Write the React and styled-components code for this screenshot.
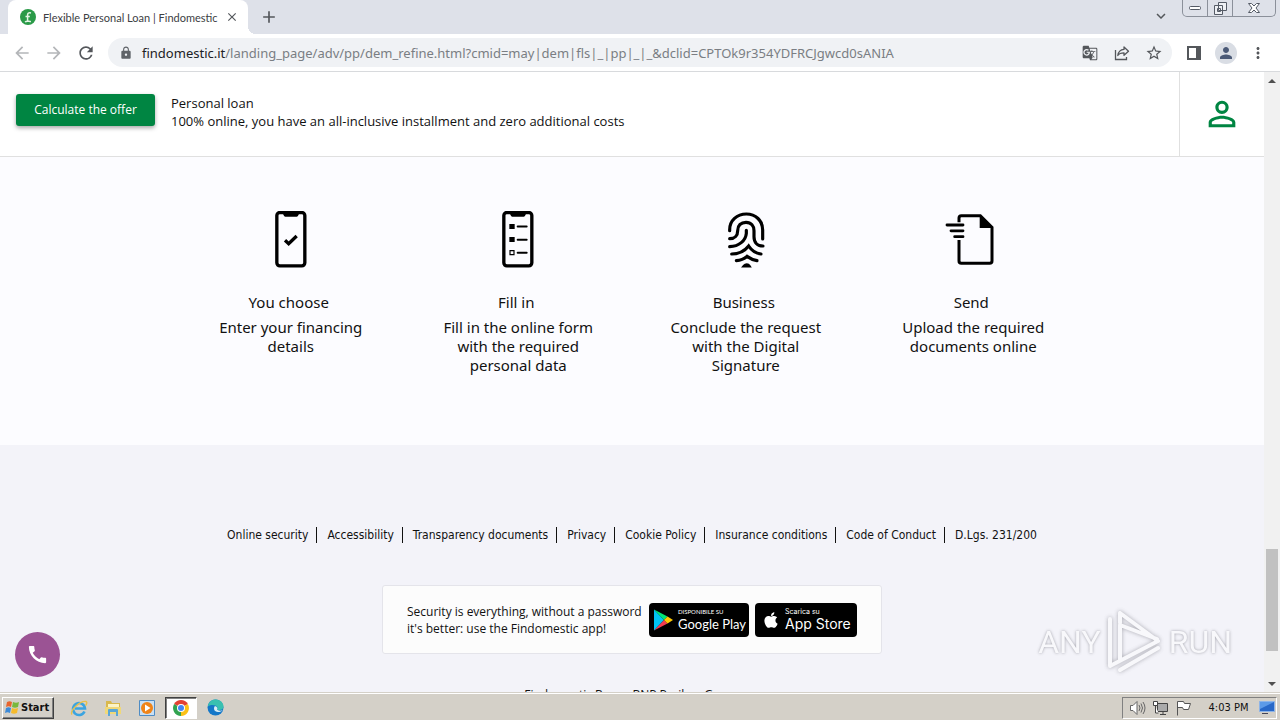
import React from 'react'
import styled, { createGlobalStyle, css } from 'styled-components'
import {
  MdAdd,
  MdArrowBack,
  MdArrowForward,
  MdCall,
  MdClose,
  MdGTranslate,
  MdKeyboardArrowDown,
  MdLock,
  MdMoreVert,
  MdPerson,
  MdPersonOutline,
  MdRefresh,
  MdStarBorder,
} from 'react-icons/md'
import { FaApple } from 'react-icons/fa'

const GlobalStyle = createGlobalStyle`
  *, *::before, *::after {
    box-sizing: border-box;
  }
  body {
    margin: 0;
    color: #111;
    font-family: 'Open Sans', 'Noto Sans', sans-serif;
    font-size: 13px;
  }
  button {
    border: 0;
    padding: 0;
    background: none;
    color: inherit;
    font: inherit;
    cursor: pointer;
  }
  h1, h2, p, ul {
    margin: 0;
    padding: 0;
    font-weight: 400;
  }
  a {
    color: inherit;
    text-decoration: none;
  }
  svg {
    display: block;
    flex: none;
  }
`;

const Desktop = styled.div`
  position: relative;
  display: flex;
  flex-direction: column;
  height: 100vh;
  overflow: hidden;
  background: #fff;
`;

/* browser */

const TabStrip = styled.div`
  display: flex;
  flex: none;
  align-items: flex-start;
  height: 34px;
  padding: 0 4px 0 8px;
  background: #dee1e9;
`;

const Tab = styled.div`
  position: relative;
  display: flex;
  align-items: center;
  width: 240px;
  height: 34px;
  margin-right: 4px;
  padding: 0 8px 0 12px;
  border-radius: 8px 8px 0 0;
  background: #fff;
  color: #3c4043;
  font-family: Lato, sans-serif;
  font-size: 11px;
  white-space: nowrap;

  &::after {
    content: '';
    position: absolute;
    left: 100%;
    bottom: 0;
    width: 8px;
    height: 8px;
    background: radial-gradient(circle at 100% 0, transparent 8px, #fff 8px);
  }
  span {
    flex: 1;
    margin-left: 7px;
  }
`;

const IconButton = styled.button`
  display: flex;
  flex: none;
  align-items: center;
  justify-content: center;
  width: ${p => p.$size || 32}px;
  height: ${p => p.$size || 32}px;
  color: ${p => (p.$faded ? '#b4b6b9' : '#54575b')};
`;

const WindowButtons = styled.div`
  display: flex;
  margin-left: 5px;
  border: 1px solid #8b909a;
  border-top: 0;
  border-radius: 0 0 5px 5px;

  button {
    display: flex;
    align-items: center;
    justify-content: center;
    width: 25px;
    height: 16px;
    border-right: 1px solid #8b909a;
  }
  button:last-child {
    width: 42px;
    border-right: 0;
  }
`;

const Spacer = styled.div`
  flex: 1;
`;

const Toolbar = styled.div`
  display: flex;
  flex: none;
  align-items: center;
  height: 38px;
  padding: 0 6px;
  border-bottom: 1px solid #d8dadd;
  background: #fff;
`;

const Omnibox = styled.label`
  display: flex;
  flex: 1;
  align-items: center;
  height: 29px;
  margin: 0 6px;
  padding: 0 2px;
  border-radius: 15px;
  background: #f0f2f5;
  color: #202124;
  font-family: 'Noto Sans', sans-serif;
  font-size: 13px;

  > svg {
    width: 32px;
    color: #5f6368;
  }
  input {
    flex: 1;
    min-width: 0;
    padding: 0;
    border: 0;
    outline: 0;
    background: none;
    color: #7a7e83;
    font: inherit;
  }
`;

const Avatar = styled.span`
  display: flex;
  align-items: center;
  justify-content: center;
  width: 22px;
  height: 22px;
  border-radius: 50%;
  background: #d9dde4;
  color: #4b5a77;
`;

const Viewport = styled.div`
  display: flex;
  flex: 1;
  min-height: 0;
`;

const Page = styled.div`
  flex: 1;
  min-width: 0;
  overflow: hidden;
`;

const Scrollbar = styled.div`
  display: flex;
  flex: none;
  flex-direction: column;
  align-items: center;
  width: 16px;
  background: #f1f1f1;
`;

const ScrollArrow = styled.button`
  display: flex;
  align-items: center;
  justify-content: center;
  width: 16px;
  height: 17px;
`;

const ScrollGap = styled.div`
  flex: ${p => p.$part};
`;

const Thumb = styled.div`
  flex: 102;
  width: 12px;
  background: #c1c1c1;
`;

/* page */

const OfferBar = styled.header`
  display: flex;
  height: 85px;
  padding-left: 16px;
  border-bottom: 1px solid #e0e0e0;
  background: #fff;
`;

const Offer = styled.div`
  display: flex;
  flex: 1;
  align-items: flex-start;
  gap: 16px;
  padding-top: 22px;
  line-height: 18px;
`;

const OfferButton = styled.button`
  width: 139px;
  height: 32px;
  border-radius: 3px;
  background: #008542;
  box-shadow: 0 2px 4px rgba(0, 0, 0, .35);
  color: #fff;
  font-size: 12px;
`;

const Account = styled.button`
  display: flex;
  align-items: center;
  justify-content: center;
  width: 85px;
  border-left: 1px solid #e0e0e0;
  color: #008542;
`;

const Steps = styled.section`
  padding: 54px 0 70px;
  background: #fcfcff;
`;

const StepGrid = styled.div`
  display: grid;
  grid-template-columns: repeat(4, 1fr);
  max-width: 910px;
  margin: 0 auto;
`;

const Step = styled.article`
  display: flex;
  flex-direction: column;
  align-items: center;
  font-family: 'Noto Sans', sans-serif;
  font-size: 15px;
  line-height: 19px;
  text-align: center;

  h2 {
    margin: 25px 0 6px;
    padding-right: 4px;
    font-size: 15px;
  }
  p {
    max-width: 168px;
  }
`;

const Footer = styled.footer`
  display: flex;
  flex-direction: column;
  align-items: center;
  min-height: 400px;
  padding-top: 82px;
  background: #f3f3f9;
  font-size: 12px;
`;

const FooterLinks = styled.ul`
  display: flex;
  list-style: none;
  font-family: 'DejaVu Sans Condensed', 'DejaVu Sans', sans-serif;
  line-height: 16px;
  white-space: nowrap;

  li + li {
    margin-left: 8px;
    padding-left: 10px;
    border-left: 1px solid #111;
  }
`;

const AppCard = styled.div`
  display: flex;
  align-items: center;
  justify-content: space-between;
  width: 500px;
  height: 69px;
  margin: 42px 0 32px;
  padding: 0 24px;
  border: 1px solid #e4e4ea;
  border-radius: 3px;
  background: #fcfcfc;

  p {
    line-height: 17px;
    white-space: nowrap;
  }
`;

const Badges = styled.div`
  display: flex;
  gap: 6px;
`;

const Badge = styled.a`
  display: flex;
  align-items: center;
  gap: 5px;
  width: ${p => p.$width}px;
  height: 34px;
  padding-left: ${p => p.$inset}px;
  border-radius: 4px;
  background: #000;
  color: #fff;
  font-family: ${p => p.$font}, sans-serif;
  font-size: ${p => p.$size}px;
  line-height: 16px;
  white-space: nowrap;

  small {
    display: block;
    font-size: ${p => p.$small}px;
    line-height: 8px;
  }
`;

const CallButton = styled.button`
  position: absolute;
  left: 15px;
  bottom: 43px;
  display: flex;
  align-items: center;
  justify-content: center;
  width: 45px;
  height: 45px;
  border-radius: 50%;
  background: #9b5394;
  color: #fff;
`;

const Watermark = styled.div`
  position: absolute;
  right: 48px;
  bottom: 46px;
  display: flex;
  align-items: center;
  gap: 6px;
  color: #fafafc;
  font-family: Roboto, 'Liberation Sans', sans-serif;
  font-size: 32px;
  line-height: 40px;
  text-shadow: 0 0 3px rgba(110, 110, 120, .8);
  opacity: .8;
  pointer-events: none;

  svg {
    filter: drop-shadow(0 0 2px rgba(110, 110, 120, .7));
  }
`;

/* taskbar */

const Taskbar = styled.div`
  display: flex;
  flex: none;
  align-items: center;
  height: 28px;
  padding: 2px 3px 0 2px;
  border-top: 1px solid #d4d0c8;
  background: #d4d0c8;
  box-shadow: inset 0 1px #fff;
  font-family: 'DejaVu Sans Condensed', 'DejaVu Sans', sans-serif;
  font-size: 11px;
`;

const StartButton = styled.button`
  display: flex;
  align-items: center;
  gap: 1px;
  width: 52px;
  height: 22px;
  margin-right: 9px;
  padding-left: 1px;
  border: 1px solid;
  border-color: #fff #404040 #404040 #fff;
  box-shadow: inset -1px -1px #808080;
  font-weight: 700;
`;

const TaskButton = styled.button`
  display: flex;
  align-items: center;
  justify-content: center;
  width: 32px;
  height: 22px;
  margin-right: 2px;
  ${p => p.$active && css`
    border: 1px solid;
    border-color: #404040 #fff #fff #404040;
    background: #fff;
    box-shadow: inset 1px 1px #808080;
  `}
`;

const Tray = styled.div`
  display: flex;
  align-items: center;
  gap: 6px;
  width: 155px;
  height: 22px;
  padding: 0 1px 0 6px;
  border: 1px solid;
  border-color: #808080 #fff #fff #808080;
  white-space: nowrap;

  time {
    flex: 1;
    padding-left: 6px;
    text-align: center;
  }
`;

const ShareIcon = () => (
  <svg width="16" height="16" viewBox="0 0 16 16" fill="none" stroke="currentColor" strokeWidth="1.3">
    <path d="M1.5 5v9.5h11V12" />
    <path d="M10 2l4.5 4.2L10 10.300V7.800c-3 0-5 .8-6.200 2.700C4.300 7 6.500 4.700 10 4.400z" strokeLinejoin="round" />
  </svg>
)

const SidePanelIcon = () => (
  <svg width="14" height="14" viewBox="0 0 14 14">
    <path d="M1 1h12v12H1z" fill="none" stroke="currentColor" strokeWidth="2" />
    <path d="M9 0h5v14H9z" fill="currentColor" />
  </svg>
)

const Favicon = () => (
  <svg width="16" height="16" viewBox="0 0 16 16">
    <circle cx="8" cy="8" r="8" fill="#2a9a48" />
    <path d="M11 4C8.500 3.300 7.600 4.300 7.600 6v5.500M5.500 7.500h4.300M5 13c2-1.500 4-.2 6-.6" fill="none" stroke="#e4f5e6" strokeWidth="1.500" />
  </svg>
)

const Phone = ({ children }) => (
  <svg width="32" height="57" viewBox="225 63 96 171">
    <rect x="230.500" y="67.500" width="84" height="160" rx="9" fill="none" stroke="#000" strokeWidth="10" />
    <path d="M246 68h54q-4 3-5 8-1 4-5 4h-34q-4 0-5-4-1-5-5-8z" />
    {children}
  </svg>
)

const ChooseIcon = () => (
  <Phone>
    <path d="M255 151l11 10 24-23" fill="none" stroke="#000" strokeWidth="10" />
  </Phone>
)

const FormIcon = () => (
  <Phone>
    <path d="M247 102h16v15h-16zM247 141h16v15h-16z" />
    <path d="M249 182h12v12h-12z" fill="none" stroke="#000" strokeWidth="3.500" />
    <path d="M272 109.500h27M272 149h27M272 188h27" stroke="#000" strokeWidth="6" strokeLinecap="round" />
  </Phone>
)

const FingerprintIcon = () => (
  <svg width="38" height="57" viewBox="260 63 114 171" fill="none" stroke="#000" strokeWidth="9.500" strokeLinecap="round">
    <path d="M268 122v-3c0-28 22-47 50-47s49 20 49 48v27" />
    <path d="M268 146c16 0 24-10 24-24 0-16 10-25 25-25 16 0 24 11 24 25v18c0 18 11 28 27 28" />
    <path d="M318 121v9c-2 22-22 39-50 40" />
    <path d="M274 192c22 0 40-10 51-24 9 14 21 22 37 24" />
    <path d="M288 212c14-1 24-6 32-13 10 7 18 11 30 13" />
    <path d="M312 228c4-5 11-5 14 0z" />
  </svg>
)

const SendIcon = () => (
  <svg width="57" height="57" viewBox="914 63 171 171" fill="none" stroke="#000" strokeWidth="9">
    <path d="M956 97V84q0-7 7-7h57l35 35v101q0 7-7 7h-85q-7 0-7-7v-63" />
    <path d="M1018 76v38h38z" fill="#000" stroke="none" />
    <path d="M920 105h48M932 122.500h36M943 140h25" strokeWidth="8.500" strokeLinecap="round" />
  </svg>
)

const PlayIcon = () => (
  <svg width="20" height="22" viewBox="0 0 20 22">
    <path d="M1 .5v21L11 11z" fill="#00c4f4" />
    <path d="M1 .5L11 11l3.500-3.500z" fill="#00e676" />
    <path d="M1 21.500L11 11l3.500 3.500z" fill="#f33b50" />
    <path d="M14.500 7.500L20 11l-5.500 3.500L11 11z" fill="#ffc900" />
  </svg>
)

const PlayMark = () => (
  <svg width="56" height="64" viewBox="0 0 56 64" fill="none" stroke="#fafafc" strokeWidth="4" strokeLinejoin="round" strokeLinecap="round">
    <path d="M50 29L13 15v35M3 9v47l48-25L13 3v10" />
    <path d="M13 60l38-22" />
  </svg>
)

const WindowsIcon = () => (
  <svg width="16" height="16" viewBox="0 0 16 16">
    <path d="M3 2c2-1 3-1 5 0L7 7C5 6 4 6 2 7z" fill="#e8642c" />
    <path d="M9 2c2 1 4 1 6 0l-1 5c-2 1-4 1-6 0z" fill="#79b83c" />
    <path d="M2 8c2-1 3-1 5 0l-1 5c-2-1-3-1-5 0z" fill="#3c8ad8" />
    <path d="M8 8c2 1 4 1 6 0l-1 5c-2 1-4 1-6 0z" fill="#f6bb2c" />
  </svg>
)

const ExplorerIcon = () => (
  <svg width="18" height="18" viewBox="0 0 18 18" fill="none">
    <path d="M14.500 12.500A6 6 0 1 1 15 9.500H5" stroke="#3ba4e0" strokeWidth="2.600" />
    <path d="M2 15.500C-.5 12 10 1.500 16 2.500c1.500.5.5 3-.5 4" stroke="#e8c04a" strokeWidth="1.400" />
  </svg>
)

const FolderIcon = () => (
  <svg width="18" height="18" viewBox="0 0 18 18">
    <path d="M2 2h5l1 2h8v11H2z" fill="#d9b84c" />
    <path d="M4 5h11v4H4z" fill="#fbf3c6" />
    <path d="M1 8h16v7H1z" fill="#f0d878" />
    <path d="M4 17v-6q0-1 1-1h8q1 0 1 1v6h-2v-4H6v4z" fill="#5aa6d6" />
  </svg>
)

const MediaIcon = () => (
  <svg width="16" height="16" viewBox="0 0 16 16">
    <path d="M.5.5h15v15H.5z" fill="#c9e0f4" stroke="#4f8cc4" />
    <circle cx="8" cy="8" r="6" fill="#f08418" />
    <path d="M6 4.500v7L11.500 8z" fill="#fff" />
  </svg>
)

const ChromeIcon = () => (
  <svg width="16" height="16" viewBox="0 0 16 16">
    <path d="M8 8L1.100 4A8 8 0 0 1 14.900 4z" fill="#e34133" />
    <path d="M8 8l6.900-4A8 8 0 0 1 8 16z" fill="#fbc116" />
    <path d="M8 8v8A8 8 0 0 1 1.100 4z" fill="#31a350" />
    <circle cx="8" cy="8" r="4" fill="#fff" />
    <circle cx="8" cy="8" r="3" fill="#4285f4" />
  </svg>
)

const EdgeIcon = () => (
  <svg width="17" height="17" viewBox="0 0 17 17">
    <circle cx="8.500" cy="8.500" r="8" fill="#1477c8" />
    <path d="M.7 7.500C2 1.500 7 0 10.500.8c4 .9 6 4 6 6.700 0 3-3 4.200-6.500 3.200 1-1.200.8-3-1-4C6 5.500 2.500 6 .7 7.500z" fill="#39c0b0" />
    <path d="M8 7c-2 2-1 6 3 6 2 0 3.500-.5 5-2-1 1-4 1-6-.3 1-1.200.5-3-2-3.700z" fill="#d9eef5" />
  </svg>
)

const SoundIcon = () => (
  <svg width="17" height="16" viewBox="0 0 17 16" fill="none" stroke="#666">
    <path d="M1.500 5.500H4l4-4v13l-4-4H1.500z" fill="#fff" />
    <path d="M10 5q2 3 0 6M12 3.500q3 4.500 0 9M14 2q4 6 0 12" />
  </svg>
)

const NetworkIcon = () => (
  <svg width="17" height="16" viewBox="0 0 17 16" fill="none" stroke="#444">
    <path d="M5.500 3.500h10v8h-10z" fill="#aaa" />
    <path d="M8 14.500h6M11 12v2" />
    <path d="M1.500 1.500h4v4h-4zM3.500 6v7h3" fill="#fff" />
  </svg>
)

const FlagIcon = () => (
  <svg width="17" height="16" viewBox="0 0 17 16">
    <path d="M2.500 15.500v-14h6l1 2h6l-2 6h-5l-1-2h-5" fill="#fff" stroke="#555" />
  </svg>
)

const DisplayIcon = () => (
  <svg width="16" height="14" viewBox="0 0 16 14">
    <path d="M.5.500h15v10H.5z" fill="#2868c8" stroke="#8db4e8" />
    <path d="M1 1h14L1 8z" fill="#5c9ae8" />
    <path d="M3 12h6v1H3z" fill="#445" />
  </svg>
)

const steps = [
  { title: 'You choose', text: 'Enter your financing details', Icon: ChooseIcon },
  { title: 'Fill in', text: 'Fill in the online form with the required personal data', Icon: FormIcon },
  { title: 'Business', text: 'Conclude the request with the Digital Signature', Icon: FingerprintIcon },
  { title: 'Send', text: 'Upload the required documents online', Icon: SendIcon },
]

const links = [
  'Online security',
  'Accessibility',
  'Transparency documents',
  'Privacy',
  'Cookie Policy',
  'Insurance conditions',
  'Code of Conduct',
  'D.Lgs. 231/200',
]

const BrowserTop = () => (
  <>
    <TabStrip>
      <Tab>
        <Favicon />
        <span>Flexible Personal Loan | Findomestic</span>
        <IconButton $size={16} aria-label="Close tab"><MdClose size={14} /></IconButton>
      </Tab>
      <IconButton $size={34} aria-label="New tab"><MdAdd size={20} /></IconButton>
      <Spacer />
      <IconButton aria-label="Search tabs"><MdKeyboardArrowDown size={18} /></IconButton>
      <WindowButtons>
        <button aria-label="Minimize">
          <svg width="12" height="4" viewBox="0 0 12 4"><rect x=".5" y=".5" width="11" height="3" rx="1" fill="#fff" stroke="#555b66" /></svg>
        </button>
        <button aria-label="Restore">
          <svg width="13" height="13" viewBox="0 0 13 13" fill="#eef0f4" stroke="#555b66">
            <path d="M4.500.5h8v8h-8zM.5 3.500h8v9h-8zM3.500 6.500h3v3h-3z" />
          </svg>
        </button>
        <button aria-label="Close">
          <svg width="12" height="10" viewBox="0 0 12 10"><path d="M.5.500h3L6 3 8.500.5h3L8 5l3.500 4.500h-3L6 7 3.500 9.500h-3L4 5z" fill="#fff" stroke="#555b66" /></svg>
        </button>
      </WindowButtons>
    </TabStrip>
    <Toolbar>
      <IconButton $faded aria-label="Back"><MdArrowBack size={20} /></IconButton>
      <IconButton $faded aria-label="Forward"><MdArrowForward size={20} /></IconButton>
      <IconButton aria-label="Reload"><MdRefresh size={20} /></IconButton>
      <Omnibox>
        <MdLock size={14} />
        <span>findomestic.it</span>
        <input
          aria-label="Address"
          defaultValue="/landing_page/adv/pp/dem_refine.html?cmid=may|dem|fls|_|pp|_|_&dclid=CPTOk9r354YDFRCJgwcd0sANIA"
        />
        <IconButton aria-label="Translate"><MdGTranslate size={16} /></IconButton>
        <IconButton aria-label="Share"><ShareIcon /></IconButton>
        <IconButton aria-label="Bookmark"><MdStarBorder size={18} /></IconButton>
      </Omnibox>
      <IconButton aria-label="Side panel"><SidePanelIcon /></IconButton>
      <IconButton aria-label="Profile"><Avatar><MdPerson size={18} /></Avatar></IconButton>
      <IconButton aria-label="Menu"><MdMoreVert size={18} /></IconButton>
    </Toolbar>
  </>
)

const App = () => (
  <Desktop>
    <GlobalStyle />
    <BrowserTop />
    <Viewport>
      <Page>
        <OfferBar>
          <Offer>
            <OfferButton>Calculate the offer</OfferButton>
            <div>
              <p>Personal loan</p>
              <p>100% online, you have an all-inclusive installment and zero additional costs</p>
            </div>
          </Offer>
          <Account aria-label="Account"><MdPersonOutline size={40} /></Account>
        </OfferBar>
        <Steps>
          <StepGrid>
            {steps.map(({ title, text, Icon }) => (
              <Step key={title}>
                <Icon />
                <h2>{title}</h2>
                <p>{text}</p>
              </Step>
            ))}
          </StepGrid>
        </Steps>
        <Footer>
          <FooterLinks>
            {links.map(link => <li key={link}><a href="#">{link}</a></li>)}
          </FooterLinks>
          <AppCard>
            <p>Security is everything, without a password<br />it's better: use the Findomestic app!</p>
            <Badges>
              <Badge href="#" $width={100} $inset={4} $font="Lato" $size={13} $small={6}>
                <PlayIcon />
                <span><small>DISPONIBILE SU</small>Google Play</span>
              </Badge>
              <Badge href="#" $width={102} $inset={7} $font="Inter" $size={14} $small={7}>
                <FaApple size={18} />
                <span><small>Scarica su</small>App Store</span>
              </Badge>
            </Badges>
          </AppCard>
          <p>Findomestic Banca BNP Paribas Group</p>
        </Footer>
      </Page>
      <Scrollbar>
        <ScrollArrow aria-label="Scroll up">
          <svg width="8" height="4" viewBox="0 0 8 4"><path d="M4 0l4 4H0z" fill="#505050" /></svg>
        </ScrollArrow>
        <ScrollGap $part={460} />
        <Thumb />
        <ScrollGap $part={24} />
        <ScrollArrow aria-label="Scroll down">
          <svg width="8" height="4" viewBox="0 0 8 4"><path d="M4 4L0 0h8z" fill="#505050" /></svg>
        </ScrollArrow>
      </Scrollbar>
    </Viewport>
    <CallButton aria-label="Call"><MdCall size={23} /></CallButton>
    <Watermark>
      <span>ANY</span>
      <PlayMark />
      <span>RUN</span>
    </Watermark>
    <Taskbar>
      <StartButton><WindowsIcon />Start</StartButton>
      <TaskButton aria-label="Internet Explorer"><ExplorerIcon /></TaskButton>
      <TaskButton aria-label="Explorer"><FolderIcon /></TaskButton>
      <TaskButton aria-label="Media Player"><MediaIcon /></TaskButton>
      <TaskButton $active aria-label="Chrome"><ChromeIcon /></TaskButton>
      <TaskButton aria-label="Edge"><EdgeIcon /></TaskButton>
      <Spacer />
      <Tray>
        <SoundIcon />
        <NetworkIcon />
        <FlagIcon />
        <time>4:03 PM</time>
        <DisplayIcon />
      </Tray>
    </Taskbar>
  </Desktop>
)

export default App
